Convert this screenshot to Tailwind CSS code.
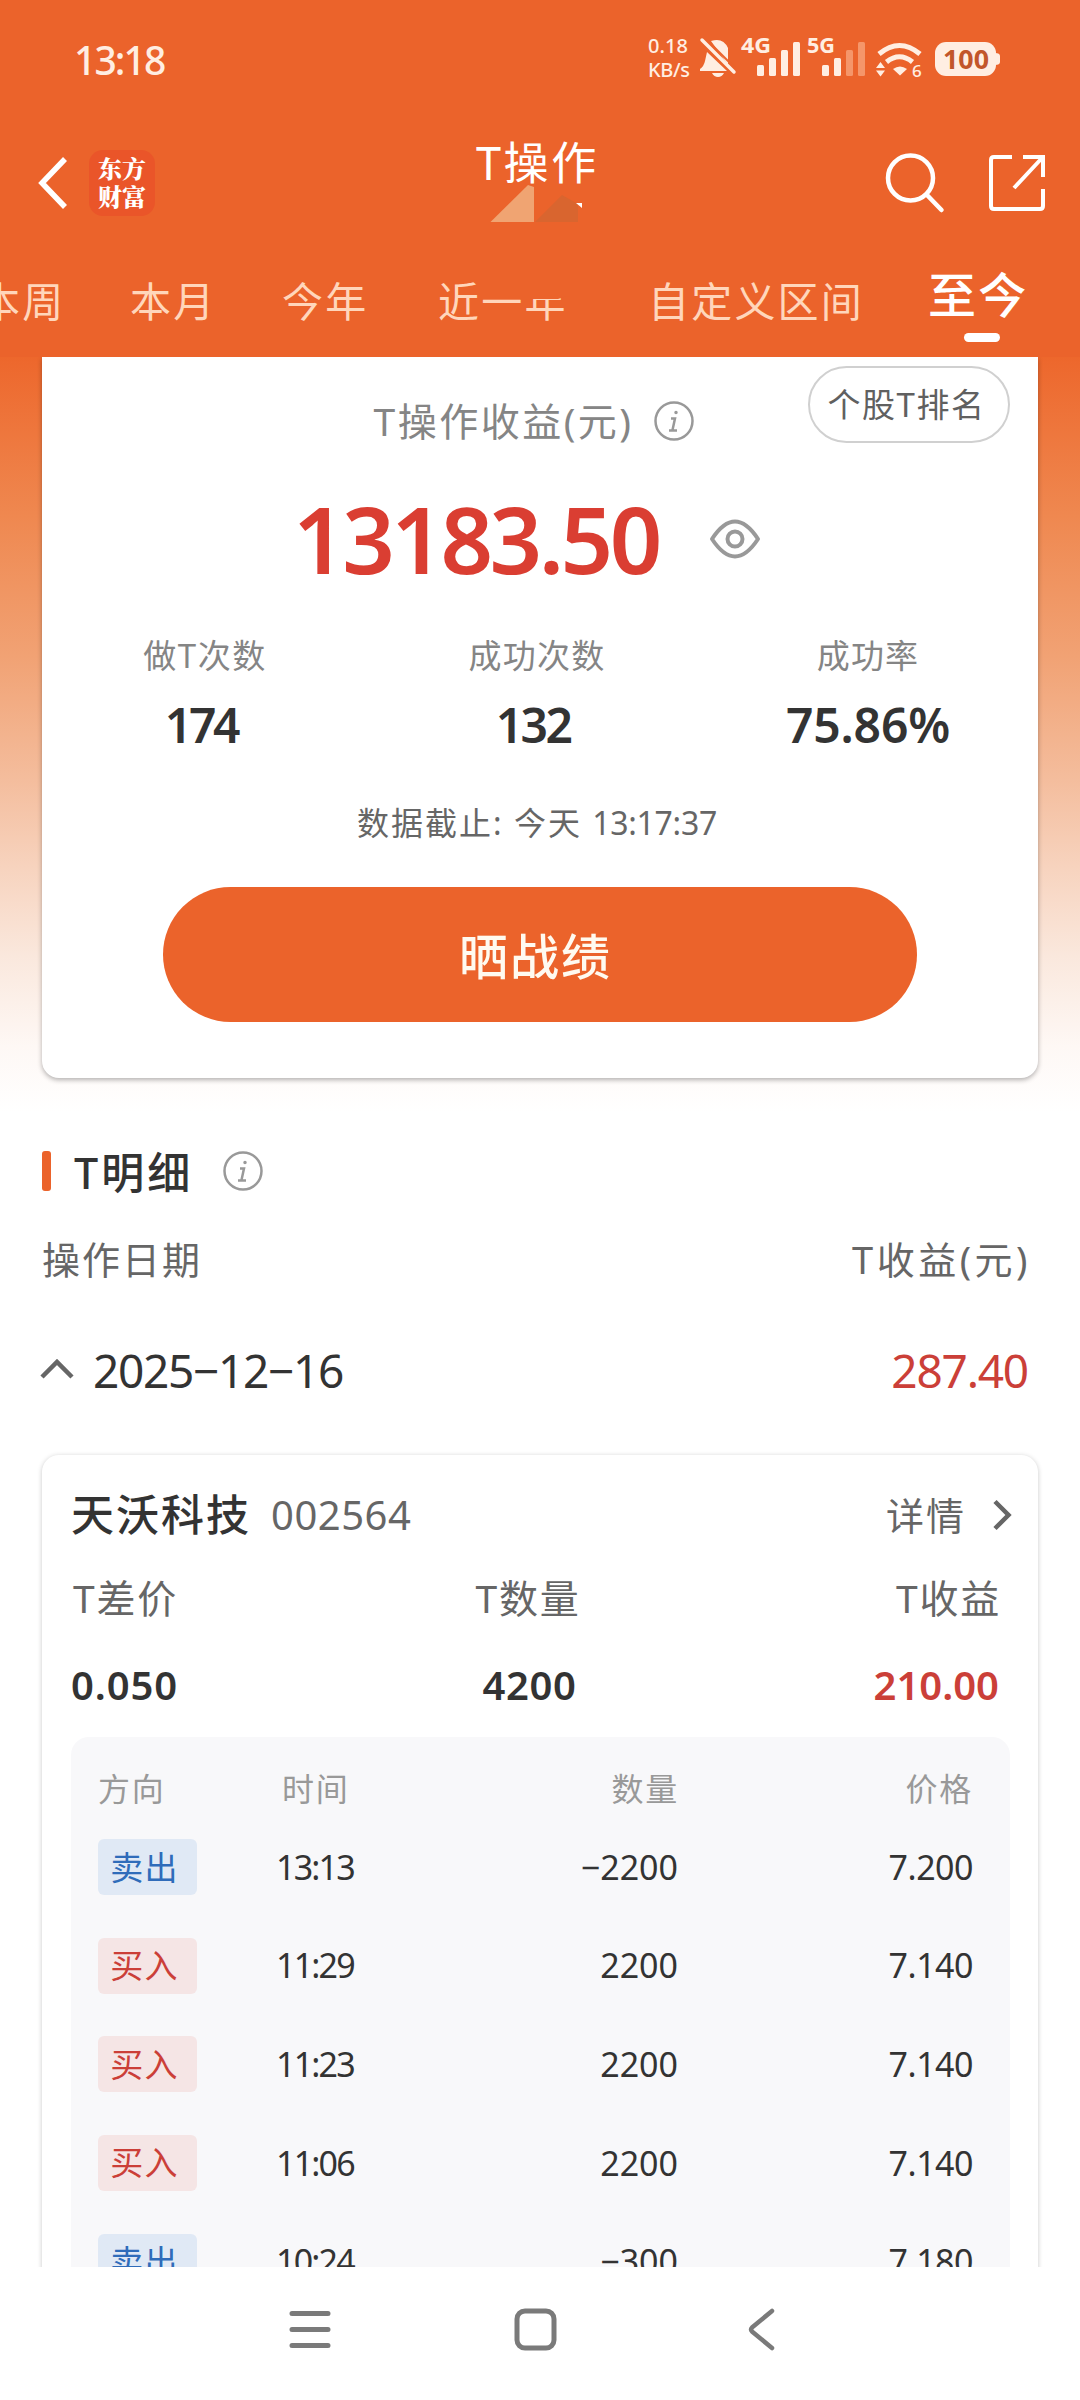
<!DOCTYPE html>
<html lang="zh-CN">
<head>
  <meta charset="UTF-8">
  <meta name="viewport" content="width=device-width, initial-scale=1.0">
  <title>T操作</title>
  <script src="https://cdn.jsdelivr.net/npm/@tailwindcss/browser@4"></script>
</head>
<body class="bg-white">
<div class="w-[1080px] h-[2400px] overflow-hidden flex flex-col bg-white text-[#333] font-['Noto_Sans','Noto_Sans_CJK_SC',sans-serif] whitespace-nowrap">

  <!-- Header -->
  <header class="h-[357px] shrink-0 bg-[#eb632b] text-white flex flex-col">

    <!-- Status bar -->
    <div class="h-[120px] shrink-0 flex justify-between pl-[74px] pr-[78px] text-[#ffeee2]">
      <div class="pt-[40px] text-[39px] leading-[40px] font-medium tracking-[-1.9px]">13:18</div>
      <svg width="356" height="120" viewBox="646 0 356 120" fill="#ffeee2">
        <text x="648" y="52.500" font-size="20" textLength="40" class="font-medium">0.18</text>
        <text x="648" y="77" font-size="20" textLength="42" class="font-medium">KB/s</text>
        <!-- muted bell -->
        <path d="M711 41q12-4 17 7v17zM707 52v0l20 19H700v-2q4-3 5-8zM712 73h12q-2 4-6 4t-6-4z"/>
        <path d="M702 40l32 32" stroke="#ffeee2" stroke-width="3.500" stroke-linecap="round"/>
        <path d="M708 41l27 27" stroke="#eb632b" stroke-width="2"/>
        <!-- signals -->
        <text x="741" y="53" font-size="21" textLength="30" lengthAdjust="spacingAndGlyphs" class="font-bold">4G</text>
        <rect x="757" y="65" width="7" height="11" rx="1.500"/>
        <rect x="769" y="58" width="7" height="18" rx="1.500"/>
        <rect x="781" y="50" width="7" height="26" rx="1.500"/>
        <rect x="793" y="42" width="7" height="34" rx="1.500"/>
        <text x="807" y="53" font-size="21" textLength="28" lengthAdjust="spacingAndGlyphs" class="font-bold">5G</text>
        <rect x="822" y="65" width="7" height="11" rx="1.500"/>
        <rect x="834" y="58" width="7" height="18" rx="1.500"/>
        <rect x="846" y="50" width="7" height="26" rx="1.500" fill="#f5966a"/>
        <rect x="858" y="42" width="7" height="34" rx="1.500" fill="#f5966a"/>
        <!-- wifi -->
        <path d="M879 54q20.500-17 41 0M886.500 62q13-10.500 26 0" fill="none" stroke="#ffeee2" stroke-width="5"/>
        <path d="M893 69q7-5 14 0l-7 6.500z"/>
        <path d="M876 68l4.500-6 4.500 6zM876 70.500l4.500 6 4.500-6z"/>
        <text x="912" y="77" font-size="17" class="font-medium">6</text>
        <!-- battery -->
        <rect x="935" y="42" width="61" height="34" rx="11"/>
        <path d="M995 53q5 0 5 3v6q0 3-5 3z"/>
        <text x="943" y="69" font-size="27" textLength="46" lengthAdjust="spacingAndGlyphs" fill="#c2562a" class="font-bold">100</text>
      </svg>
    </div>

    <!-- Title bar -->
    <div class="h-[126px] shrink-0 flex items-center pl-[38px] pr-[34px]">
      <svg class="w-[30px] h-[52px]" viewBox="0 0 30 52" fill="none" stroke="#fff" stroke-width="5.500"><path d="M27 2L4 26l23 24"/></svg>
      <div class="ml-[21px] w-[66px] h-[66px] rounded-[14px] bg-[#ea5529] flex flex-col items-center justify-center pb-[2px] text-[24px] leading-[28px] font-black font-['Noto_Serif_CJK_SC','Noto_Sans_CJK_SC',sans-serif]">
        <span>东方</span>
        <span>财富</span>
      </div>
      <div class="ml-[319px] w-[130px] h-[126px] relative">
        <h1 class="pt-[15px] pl-[2px] text-[45px] leading-[56px] tracking-[2.600px]">T操作</h1>
        <svg class="absolute left-[12px] top-[60px] w-[100px] h-[45px]" viewBox="486 180 100 45">
          <path d="M490.500 222L528 185l6 2v35z" fill="#f0a472"/>
          <path d="M535 222l27-27 16 9v18z" fill="#d9652f"/>
          <path d="M576 203h6v5z" fill="#fff"/>
        </svg>
      </div>
      <svg class="ml-auto w-[60px] h-[62px]" viewBox="0 0 60 62" fill="none" stroke="#fff" stroke-width="4.500" stroke-linecap="round"><circle cx="25.500" cy="26" r="22.500"/><path d="M42 43l14.500 15"/></svg>
      <svg class="ml-[43px] w-[58px] h-[58px]" viewBox="0 0 58 58" fill="none" stroke="#fff" stroke-width="4"><path d="M24 3H6q-3 0-3 3v46q0 3 3 3h46q3 0 3-3V35M35 3h20v20M54 4L26 34"/></svg>
    </div>

    <!-- Period tabs -->
    <nav class="h-[111px] shrink-0 relative flex text-[41px] leading-[56px] tracking-[2.200px] text-[#ffd6bb] pt-[27px]">
      <span class="ml-[-21px] w-[151px]">本周</span>
      <span class="w-[152px]">本月</span>
      <span class="w-[156px]">今年</span>
      <span class="w-[210px]">近一年</span>
      <span class="w-[280px]">自定义区间</span>
      <div class="flex flex-col items-center -mt-[6px] text-[48px] leading-[56px] font-medium text-white">
        <span>至今</span>
        <i class="mt-[10px] ml-[8px] w-[36px] h-[9px] rounded-full bg-white"></i>
      </div>
      <svg class="absolute left-[524px] top-[32px] w-[46px] h-[27px]" viewBox="0 0 46 27"><path d="M0 0h46v18l-6 1-6 2H0z" fill="#eb632b"/></svg>
    </nav>
  </header>

  <!-- Scroll area -->
  <main class="h-[1910px] shrink-0 overflow-hidden bg-[linear-gradient(180deg,#ed672c_0px,#ef8850_160px,#f1a274_300px,#f4bd9d_423px,#f7d3be_510px,#fae8dd_600px,#fef8f5_690px,#ffffff_755px)] bg-no-repeat">

    <!-- Summary card -->
    <section class="relative mx-[42px] h-[721px] rounded-b-[17px] bg-white shadow-[0_2px_5px_rgba(0,0,0,0.3)] flex flex-col items-center">
      <div class="absolute right-[28px] top-[9px] w-[202px] h-[77px] rounded-full border-2 border-[#d0d0d0] flex items-center justify-center pr-[5px] text-[33px] tracking-[1.500px] text-[#606060]">个股T排名</div>
      <div class="mt-[36px] h-[56px] pr-[12px] flex items-center text-[39px] text-[#858585] tracking-[2.500px]">
        <span>T操作收益(元)</span>
        <svg class="ml-[19px] w-[42px] h-[42px]" viewBox="0 0 42 42" fill="none" stroke="#999" stroke-width="2.500"><circle cx="21" cy="21" r="18.500"/><path d="M18 18.500h4l-2.500 11.500M16 30.500h8"/><circle cx="23" cy="12.500" r="1" fill="#999" stroke-width="1.500"/></svg>
      </div>
      <div class="mt-[34px] h-[112px] mr-[26px] flex items-center">
        <span class="text-[92px] leading-[112px] font-[580] text-[#da3e32] tracking-[-3.500px]">13183.50</span>
        <svg class="ml-[50px] w-[52px] h-[42px]" viewBox="0 0 52 42" fill="none" stroke="#999" stroke-width="4"><path d="M3 21Q26-14 49 21Q26 56 3 21z" stroke-linejoin="round"/><circle cx="26" cy="21" r="7.500"/></svg>
      </div>
      <div class="mt-[37px] w-full pr-[6px] grid grid-cols-3 text-center">
        <div class="pr-[4px]">
          <div class="text-[33px] leading-[48px] tracking-[1.600px] text-[#858585]">做T次数</div>
          <div class="mt-[15px] pr-[8px] text-[48px] leading-[60px] font-[560] tracking-[-3.300px]">174</div>
        </div>
        <div>
          <div class="text-[33px] leading-[48px] tracking-[1.200px] text-[#858585]">成功次数</div>
          <div class="mt-[15px] pr-[8px] text-[48px] leading-[60px] font-[560] tracking-[-2.600px]">132</div>
        </div>
        <div class="pl-[2px]">
          <div class="text-[33px] leading-[48px] tracking-[1.200px] text-[#858585]">成功率</div>
          <div class="mt-[15px] text-[48px] leading-[60px] font-[560] tracking-[-0.200px]">75.86%</div>
        </div>
      </div>
      <div class="mt-[44px] pr-[6px] text-[32px] leading-[48px] text-[#666]"><span class="tracking-[2px]">数据截止: 今天 </span><span class="tracking-[-0.300px]">13:17:37</span></div>
      <button class="mt-[40px] w-[754px] h-[135px] rounded-full bg-[#eb632b] text-[#fffaf0] pt-[4px] pr-[9px] text-[49px] tracking-[2px] font-medium">晒战绩</button>
    </section>

    <!-- Details heading -->
    <div class="mt-[65px] ml-[42px] h-[56px] flex items-center">
      <i class="w-[9px] h-[40px] rounded-[3px] bg-[#eb632b]"></i>
      <h2 class="ml-[23px] pt-[3px] text-[43px] leading-[56px] font-medium tracking-[3px]">T明细</h2>
      <svg class="ml-[29px] w-[42px] h-[42px]" viewBox="0 0 42 42" fill="none" stroke="#999" stroke-width="2.500"><circle cx="21" cy="21" r="18.500"/><path d="M18 18.500h4l-2.500 11.500M16 30.500h8"/><circle cx="23" cy="12.500" r="1" fill="#999" stroke-width="1.500"/></svg>
    </div>
    <div class="mt-[32px] h-[56px] pl-[42px] pr-[49px] flex justify-between text-[38px] leading-[56px] text-[#666]">
      <span class="tracking-[2px]">操作日期</span>
      <span class="tracking-[3.500px]">T收益(元)</span>
    </div>
    <div class="mt-[53px] h-[60px] pl-[40px] pr-[52px] flex items-center text-[46px] leading-[60px]">
      <svg class="w-[34px] h-[24px]" viewBox="0 0 34 24" fill="none" stroke="#666" stroke-width="4.500"><path d="M2 19L17 4l15 15"/></svg>
      <span class="ml-[19px] tracking-[-1.300px]">2025−12−16</span>
      <span class="ml-auto text-[#cb3f38] tracking-[-1.200px]">287.40</span>
    </div>

    <!-- Stock card -->
    <section class="mt-[55px] mx-[42px] h-[900px] rounded-[17px] bg-white shadow-[0_1px_5px_rgba(0,0,0,0.22)] px-[29px]">
      <div class="pt-[32px] h-[88px] flex items-center">
        <h3 class="text-[43px] leading-[56px] font-medium tracking-[2px]">天沃科技</h3>
        <span class="ml-[20px] text-[40px] text-[#666] tracking-[0.500px]">002564</span>
        <span class="ml-auto text-[38px] text-[#666] tracking-[2px]">详情</span>
        <svg class="ml-[25px] -mr-[4px] w-[22px] h-[34px]" viewBox="0 0 22 34" fill="none" stroke="#666" stroke-width="4.500"><path d="M4 3.500L17.500 17 4 30.500"/></svg>
      </div>
      <div class="mt-[27px] pl-[2px] pr-[8px] flex justify-between text-[39px] leading-[56px] tracking-[1.800px] text-[#666]">
        <span>T差价</span>
        <span class="pr-[18px]">T数量</span>
        <span>T收益</span>
      </div>
      <div class="mt-[31px] pr-[10px] grid grid-cols-[310px_1fr_310px] text-[40px] leading-[56px] font-[560]">
        <span class="tracking-[0.900px]">0.050</span>
        <span class="text-center pr-[11px] tracking-[0.600px]">4200</span>
        <span class="text-right text-[#cb3f38]">210.00</span>
      </div>

      <!-- Trade list -->
      <div class="mt-[24px] -mr-[1px] h-[700px] rounded-[18px] bg-[#f8f8fa] pl-[27px] pr-[38px] pt-[28px]">
        <div class="grid grid-cols-[184px_397px_294px] h-[48px] text-[32px] leading-[48px] tracking-[1.800px] text-[#999]">
          <span>方向</span>
          <span class="flex justify-between"><b class="font-normal">时间</b><b class="font-normal">数量</b></span>
          <span class="text-right">价格</span>
        </div>
        <div id="trades" class="pt-[5px] text-[34px]"></div>
      </div>
    </section>
  </main>

  <!-- System navigation -->
  <footer class="grow bg-white flex items-start pt-[38px] pl-[287px]">
    <svg class="w-[46px] h-[48px]" viewBox="0 0 46 48" stroke="#7a7a7a" stroke-width="5" stroke-linecap="round"><path d="M5 8.500h36M5 24.500h36M5 40.500h36"/></svg>
    <svg class="ml-[178px] w-[48px] h-[48px]" viewBox="0 0 48 48" fill="none" stroke="#7a7a7a" stroke-width="5"><rect x="6" y="6" width="37" height="37" rx="8"/></svg>
    <svg class="ml-[186px] w-[34px] h-[48px]" viewBox="0 0 34 48" fill="none" stroke="#7a7a7a" stroke-width="4.500" stroke-linecap="round" stroke-linejoin="round"><path d="M27 6L7 22.500q-2 2 0 4L27 43"/></svg>
  </footer>
</div>

<script>
  const trades = [
    { side: 'sell', time: '13:13', qty: '−2200', price: '7.200' },
    { side: 'buy', time: '11:29', qty: '2200', price: '7.140' },
    { side: 'buy', time: '11:23', qty: '2200', price: '7.140' },
    { side: 'buy', time: '11:06', qty: '2200', price: '7.140' },
    { side: 'sell', time: '10:24', qty: '−300', price: '7.180' }
  ];
  const badges = {
    sell: '<span class="w-[99px] h-[56px] rounded-[6px] bg-[#e0e9f5] text-[#2f6cba] pr-[6px] text-[33px] tracking-[1.200px] flex items-center justify-center">卖出</span>',
    buy: '<span class="w-[99px] h-[56px] rounded-[6px] bg-[#f5e5e5] text-[#cb3f38] pr-[6px] text-[33px] tracking-[1.200px] flex items-center justify-center">买入</span>'
  };

  document.getElementById('trades').innerHTML = trades.map(t => `
    <div class="h-[98.6px] grid grid-cols-[178px_402px_295px] items-center">
      ${badges[t.side]}
      <span class="flex justify-between"><span class="tracking-[-1.8px]">${t.time}</span><span>${t.qty}</span></span>
      <span class="text-right tracking-[-0.5px]">${t.price}</span>
    </div>`).join('');
</script>
</body>
</html>
